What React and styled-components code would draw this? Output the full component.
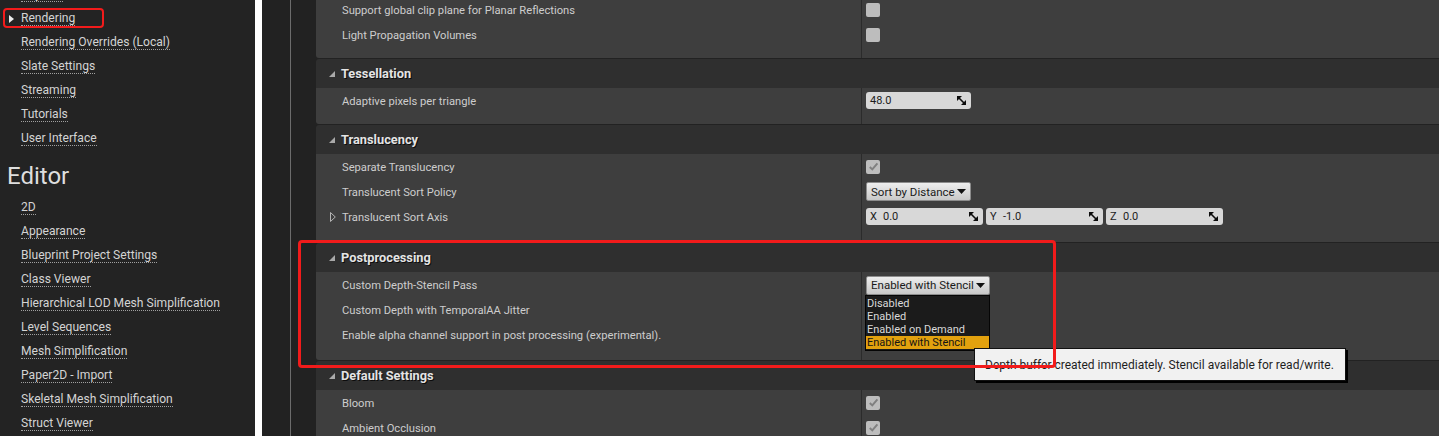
import React from 'react';
import styled, { createGlobalStyle } from 'styled-components';

const GlobalStyle = createGlobalStyle`
  html, body {
    margin: 0;
    padding: 0;
    background: #222;
    overflow: hidden;
  }
  body {
    font-family: Roboto, "Noto Sans", sans-serif;
  }
  * {
    box-sizing: border-box;
  }
`;

const Window = styled.div`
  display: flex;
  width: 1439px;
  height: 436px;
  overflow: hidden;
  background: #222;
`;

/* ---------- left navigation ---------- */

const Sidebar = styled.nav`
  width: 255px;
  flex-shrink: 0;
  background: #232323;
  overflow: hidden;
`;

const SidebarScroll = styled.div`
  margin-top: -17px;
`;

const NavItem = styled.div`
  position: relative;
  height: 24px;
  display: flex;
  align-items: center;
  padding-left: 9px;
`;

const Marker = styled.span`
  width: 12px;
  display: flex;
  align-items: center;
`;

const NavLink = styled.span`
  font-size: 12.1px;
  line-height: 13px;
  color: #d4d4d4;
  border-bottom: 1px dotted #a0a0a0;
  white-space: nowrap;
`;

const NavHeading = styled.div`
  margin: 10px 0 5px 7px;
  font-size: 24px;
  line-height: 30px;
  color: #dedede;
`;

const Callout = styled.div`
  position: absolute;
  left: ${({ left }) => left}px;
  top: ${({ top }) => top}px;
  width: ${({ width }) => width}px;
  height: ${({ height }) => height}px;
  border: ${({ thick }) => thick}px solid #f21b1b;
  border-radius: 4px;
  pointer-events: none;
  z-index: 5;
`;

/* ---------- splitter and gutter ---------- */

const Splitter = styled.div`
  width: 7px;
  flex-shrink: 0;
  background: #ffffff;
`;

const Gutter = styled.div`
  width: 29px;
  flex-shrink: 0;
  border-right: 1px solid #6c6c6c;
`;

/* ---------- details panel ---------- */

const Details = styled.div`
  flex: 1;
  display: flex;
  flex-direction: column;
  gap: 1px;
  padding-left: 25px;
  margin-top: -3px;
`;

const Section = styled.section`
  position: relative;
`;

const SectionHeader = styled.div`
  height: 29px;
  display: flex;
  align-items: center;
  padding-left: 13px;
  background: #2f2f2f;
  border-top-left-radius: 3px;
`;

const HeaderTitle = styled.span`
  margin-left: 6px;
  font-size: 12.8px;
  font-weight: 700;
  color: #e4e4e4;
  text-shadow: 1px 1px 0 #0c0c0c;
`;

const SectionBody = styled.div`
  padding-bottom: ${({ pad }) => pad}px;
  background: linear-gradient(
    to right,
    #3e3e3e 545px,
    #2b2b2b 545px,
    #2b2b2b 546px,
    #3e3e3e 546px
  );
  border-bottom-left-radius: 3px;
`;

const Row = styled.div`
  height: 25px;
  display: grid;
  grid-template-columns: 546px 1fr;
  align-items: center;
`;

const NameCell = styled.div`
  display: flex;
  align-items: center;
  padding-left: 14px;
  padding-top: 1px;
  font-size: 11.2px;
  color: #cdcdcd;
  white-space: nowrap;
`;

const ExpanderSlot = styled.span`
  width: 12px;
  display: flex;
  align-items: center;
`;

const ValueCell = styled.div`
  display: flex;
  align-items: center;
  gap: 3px;
  padding-left: 4px;
`;

const CheckBox = styled.span`
  width: 14px;
  height: 14px;
  border-radius: 2px;
  background: #bdbdbd;
  display: flex;
  align-items: center;
  justify-content: center;
`;

const NumberField = styled.div`
  width: ${({ width }) => width}px;
  height: 17px;
  display: flex;
  align-items: center;
  padding: 0 5px 0 4px;
  border-radius: 3px;
  background: #d8d8d8;
  font-size: 11px;
  color: #1c1c1c;
`;

const AxisLabel = styled.span`
  width: 13px;
`;

const FieldValue = styled.span`
  flex: 1;
`;

const ComboWrap = styled.div`
  position: relative;
`;

const ComboButton = styled.div`
  height: 19px;
  display: inline-flex;
  align-items: center;
  gap: 2px;
  padding: 0 4px 0 4px;
  border: 1px solid #8c8c8c;
  border-radius: 2px;
  background: linear-gradient(#eeeeee, #c8c8c8);
  font-size: 11.5px;
  color: #1a1a1a;
  white-space: nowrap;
`;

const Menu = styled.div`
  position: absolute;
  left: -1px;
  top: 100%;
  width: 125px;
  padding: 1px 0;
  background: #1b1b1b;
  border: 1px solid #050505;
  z-index: 2;
`;

const MenuItem = styled.div`
  height: 13px;
  line-height: 13px;
  padding-left: 1px;
  font-size: 11px;
  color: ${({ selected }) => (selected ? '#141414' : '#d9d9d9')};
  background: ${({ selected }) => (selected ? '#e2a10e' : 'transparent')};
  white-space: nowrap;
`;

const Tooltip = styled.div`
  position: absolute;
  left: 108px;
  top: 74px;
  width: 372px;
  height: 33px;
  display: flex;
  align-items: center;
  padding-left: 10px;
  background: #f1f1f1;
  border: 1px solid #111;
  box-shadow: 2px 2px 0 #000;
  font-size: 12px;
  color: #1e1e1e;
  white-space: nowrap;
  z-index: 3;
`;

/* ---------- icons ---------- */

const ArrowRight = () => (
  <svg width="5" height="8" viewBox="0 0 5 8">
    <polygon points="0,0 5,4 0,8" fill="#ececec" />
  </svg>
);

const CornerTriangle = () => (
  <svg width="6" height="6" viewBox="0 0 6 6">
    <polygon points="6,0 6,6 0,6" fill="#a9a9a9" />
  </svg>
);

const OutlineArrow = () => (
  <svg width="6" height="10" viewBox="0 0 6 10">
    <polygon points="0.5,0.5 5.3,5 0.5,9.5" fill="none" stroke="#b4b4b4" strokeWidth="1" />
  </svg>
);

const CheckMark = () => (
  <svg width="11" height="11" viewBox="0 0 11 11">
    <path d="M1.8 6 L4.3 8.4 L9.4 2.4" fill="none" stroke="#808080" strokeWidth="2" />
  </svg>
);

const SpinIcon = () => (
  <svg width="9" height="9" viewBox="0 0 9 9">
    <polygon points="0,0 5,0 0,5" fill="#0d0d0d" />
    <polygon points="9,9 4,9 9,4" fill="#0d0d0d" />
    <line x1="1.5" y1="1.5" x2="7.5" y2="7.5" stroke="#0d0d0d" strokeWidth="1.6" />
  </svg>
);

const DownTriangle = () => (
  <svg width="9" height="5" viewBox="0 0 9 5">
    <polygon points="0,0 9,0 4.5,5" fill="#111" />
  </svg>
);

/* ---------- data ---------- */

const engineLinks = [
  'Physics',
  'Rendering',
  'Rendering Overrides (Local)',
  'Slate Settings',
  'Streaming',
  'Tutorials',
  'User Interface'
];

const editorLinks = [
  '2D',
  'Appearance',
  'Blueprint Project Settings',
  'Class Viewer',
  'Hierarchical LOD Mesh Simplification',
  'Level Sequences',
  'Mesh Simplification',
  'Paper2D - Import',
  'Skeletal Mesh Simplification',
  'Struct Viewer'
];

const depthOptions = ['Disabled', 'Enabled', 'Enabled on Demand', 'Enabled with Stencil'];

/* ---------- pieces ---------- */

const Nav = ({ label, active }) => (
  <NavItem>
    <Marker>{active && <ArrowRight />}</Marker>
    <NavLink>{label}</NavLink>
    {active && <Callout left={3} top={1} width={101} height={20} thick={2} />}
  </NavItem>
);

const Property = ({ label, expandable, children }) => (
  <Row>
    <NameCell>
      <ExpanderSlot>{expandable && <OutlineArrow />}</ExpanderSlot>
      {label}
    </NameCell>
    <ValueCell>{children}</ValueCell>
  </Row>
);

const Check = ({ checked }) => <CheckBox>{checked && <CheckMark />}</CheckBox>;

const Field = ({ axis, value, width }) => (
  <NumberField width={width}>
    {axis && <AxisLabel>{axis}</AxisLabel>}
    <FieldValue>{value}</FieldValue>
    <SpinIcon />
  </NumberField>
);

const Category = ({ title, pad = 11, highlight, children }) => (
  <Section>
    {title && (
      <SectionHeader>
        <CornerTriangle />
        <HeaderTitle>{title}</HeaderTitle>
      </SectionHeader>
    )}
    <SectionBody pad={pad}>{children}</SectionBody>
    {highlight && <Callout left={-18} top={-3} width={758} height={128} thick={3} />}
  </Section>
);

const App = () => (
  <Window>
    <GlobalStyle />
    <Sidebar>
      <SidebarScroll>
        {engineLinks.map(label => (
          <Nav key={label} label={label} active={label === 'Rendering'} />
        ))}
        <NavHeading>Editor</NavHeading>
        {editorLinks.map(label => (
          <Nav key={label} label={label} />
        ))}
      </SidebarScroll>
    </Sidebar>
    <Splitter />
    <Gutter />
    <Details>
      <Category>
        <Property label="Support global clip plane for Planar Reflections">
          <Check />
        </Property>
        <Property label="Light Propagation Volumes">
          <Check />
        </Property>
      </Category>

      <Category title="Tessellation">
        <Property label="Adaptive pixels per triangle">
          <Field value="48.0" width={105} />
        </Property>
      </Category>

      <Category title="Translucency" pad={13}>
        <Property label="Separate Translucency">
          <Check checked />
        </Property>
        <Property label="Translucent Sort Policy">
          <ComboButton>
            Sort by Distance
            <DownTriangle />
          </ComboButton>
        </Property>
        <Property label="Translucent Sort Axis" expandable>
          <Field axis="X" value="0.0" width={117} />
          <Field axis="Y" value="-1.0" width={117} />
          <Field axis="Z" value="0.0" width={117} />
        </Property>
      </Category>

      <Category title="Postprocessing" pad={13} highlight>
        <Property label="Custom Depth-Stencil Pass">
          <ComboWrap>
            <ComboButton>
              Enabled with Stencil
              <DownTriangle />
            </ComboButton>
            <Menu>
              {depthOptions.map(option => (
                <MenuItem key={option} selected={option === 'Enabled with Stencil'}>
                  {option}
                </MenuItem>
              ))}
            </Menu>
            <Tooltip>Depth buffer created immediately. Stencil available for read/write.</Tooltip>
          </ComboWrap>
        </Property>
        <Property label="Custom Depth with TemporalAA Jitter" />
        <Property label="Enable alpha channel support in post processing (experimental)." />
      </Category>

      <Category title="Default Settings">
        <Property label="Bloom">
          <Check checked />
        </Property>
        <Property label="Ambient Occlusion">
          <Check checked />
        </Property>
      </Category>
    </Details>
  </Window>
);

export default App;
